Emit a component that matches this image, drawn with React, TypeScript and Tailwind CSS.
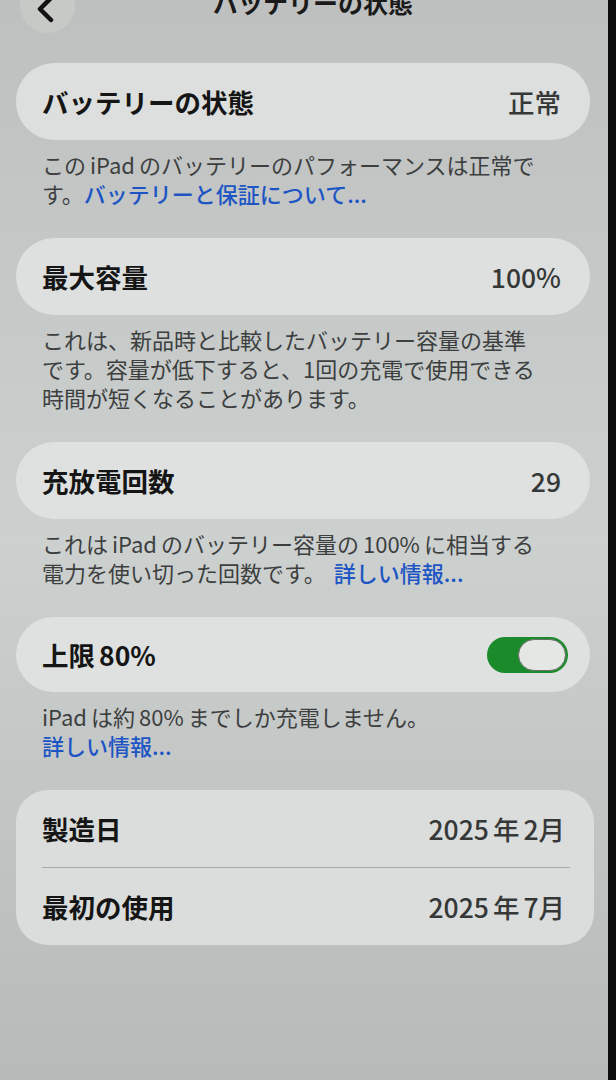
import React from 'react';

const font = { fontFamily: '"Noto Sans CJK JP", "Noto Sans", sans-serif' };

function Gap() {
  return <span className="inline-block w-[4px]" />;
}

function Row({ label, value }: { label: string; value: React.ReactNode }) {
  return (
    <div className="h-[77px] flex items-center justify-between pl-[26px] pr-[29px]">
      <span className="text-[26.5px] font-semibold text-[#151515]">{label}</span>
      <span className="text-[26.5px] font-medium text-[#363838]">{value}</span>
    </div>
  );
}

function Footer({ lines }: { lines: React.ReactNode[] }) {
  return (
    <div className="px-[26px] pt-[10px] pb-[30px] text-[22px] text-[#3d3f3f] whitespace-nowrap">
      {lines.map((line, i) => (
        <div key={i} className="h-[29px] leading-[29px] flex items-center">
          {line}
        </div>
      ))}
    </div>
  );
}

function Link({ children }: { children: React.ReactNode }) {
  return <span className="text-[#1d56c4] font-medium">{children}</span>;
}

export default function App() {
  return (
    <div style={font} className="w-[616px] h-[1080px] flex overflow-hidden bg-black">
      <div className="flex-1 bg-gradient-to-b from-[#bdc0bf] via-[#ccd0cf] to-[#b7bab9] pl-[16px] pr-[18px]">
        {/* header */}
        <div className="h-[63px] flex items-start">
          <div className="relative w-full">
            <div className="absolute left-[4px] top-[-22px] w-[55px] h-[55px] rounded-full bg-[#c6c9c5] flex items-center justify-center">
              <svg width="22" height="30" viewBox="0 0 22 30" className="mt-[8px] -ml-[4px]">
                <path d="M16 3 L5 14 L16 25" fill="none" stroke="#111" strokeWidth="4.5" strokeLinecap="round" strokeLinejoin="round" />
              </svg>
            </div>
            <div className="text-center -mt-[16px] text-[25px] font-bold text-[#1a1a1a] pl-[20px]">
              バッテリーの状態
            </div>
          </div>
        </div>

        <div className="rounded-[38px] bg-[#dcdfdd]">
          <Row label="バッテリーの状態" value="正常" />
        </div>
        <Footer
          lines={[
            <>この<Gap />iPad<Gap />のバッテリーのパフォーマンスは正常で</>,
            <>す。<Link>バッテリーと保証について...</Link></>,
          ]}
        />

        <div className="rounded-[38px] bg-[#dde0de]">
          <Row label="最大容量" value="100%" />
        </div>
        <Footer
          lines={[
            'これは、新品時と比較したバッテリー容量の基準',
            'です。容量が低下すると、1回の充電で使用できる',
            '時間が短くなることがあります。',
          ]}
        />

        <div className="rounded-[38px] bg-[#dee1df]">
          <Row label="充放電回数" value="29" />
        </div>
        <Footer
          lines={[
            <>これは<Gap />iPad<Gap />のバッテリー容量の<Gap />100%<Gap />に相当する</>,
            <>電力を使い切った回数です。<span className="inline-block w-[8px]" /><Link>詳しい情報...</Link></>,
          ]}
        />

        <div className="rounded-[38px] bg-[#dee1df] h-[75px] flex items-center justify-between pl-[26px] pr-[22px]">
          <span className="text-[26.5px] font-semibold text-[#151515]">
            上限<Gap />80%
          </span>
          <div className="w-[81px] h-[36px] rounded-full bg-[#1b8a2b] flex items-center justify-end p-[2px]">
            <div className="w-[48px] h-[32px] rounded-full bg-[#e4e7e4] border border-[#6b6e6b]" />
          </div>
        </div>
        <Footer
          lines={[
            <>iPad<Gap />は約<Gap />80%<Gap />までしか充電しません。</>,
            <Link>詳しい情報...</Link>,
          ]}
        />

        <div className="rounded-[32px] bg-[#dadddb] -mr-[4px]">
          <Row
            label="製造日"
            value={
              <>
                2025<Gap />年<Gap />2月
              </>
            }
          />
          <div className="ml-[26px] mr-[24px] h-px bg-[#a8abaa]" />
          <Row
            label="最初の使用"
            value={
              <>
                2025<Gap />年<Gap />7月
              </>
            }
          />
        </div>
      </div>
      <div className="w-[8px] bg-[#0c0c0c]" />
    </div>
  );
}
